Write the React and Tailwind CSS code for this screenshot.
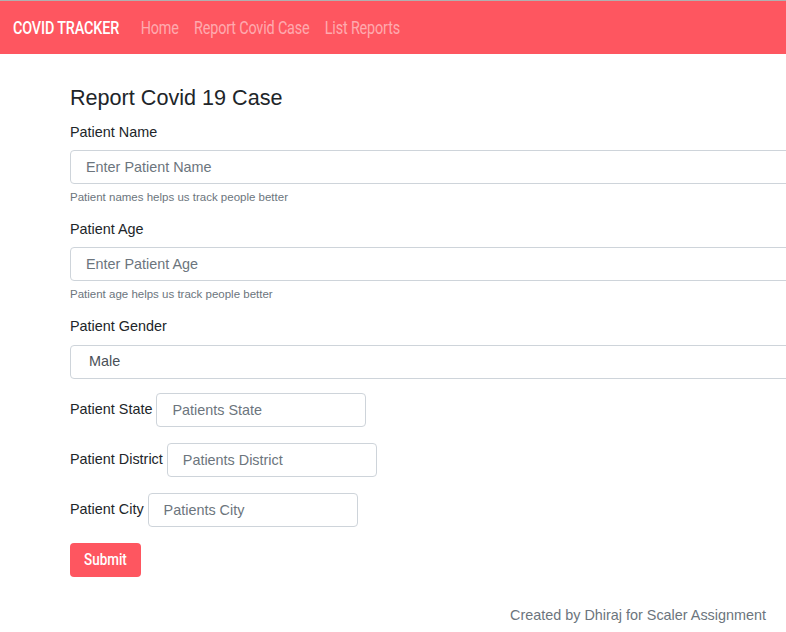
import React from 'react';

const navFont = { fontFamily: 'Roboto, "DejaVu Sans Condensed", sans-serif' };

const TextField = ({ label, placeholder, help }) => (
  <div className="mb-[14px]">
    <label className="block text-[14.4px] leading-[22px] mb-[7px]">{label}</label>
    <input
      type="text"
      placeholder={placeholder}
      className="block w-[760px] h-[34px] px-[15px] text-[14.4px] border border-[#ced4da] rounded-[4px] bg-white placeholder:text-[#6c757d] outline-none"
    />
    {help && <p className="text-[11.5px] text-[#6c757d] mt-[6px] leading-[14px]">{help}</p>}
  </div>
);

const InlineField = ({ label, placeholder }) => (
  <div className="flex items-center gap-[4px] mb-[16px]">
    <label className="text-[14.4px]">{label}</label>
    <input
      type="text"
      placeholder={placeholder}
      className="h-[34px] w-[210px] px-[15px] text-[14.4px] border border-[#ced4da] rounded-[4px] bg-white placeholder:text-[#6c757d] outline-none"
    />
  </div>
);

export default function App() {
  return (
    <div className="min-h-[632px] w-[786px] overflow-hidden bg-white text-[#212529]" style={{ fontFamily: '"Liberation Sans", Arial, sans-serif' }}>
      {/* Navbar - condensed look */}
      <nav className="h-[54px] bg-[#fe5660] border-t border-[#b0b0b0] flex items-center px-[13px]" style={navFont}>
        <div className="flex items-center origin-left scale-x-[0.8] whitespace-nowrap">
          <span className="text-white text-[18px] font-medium tracking-[-0.2px] mr-[27px]">COVID TRACKER</span>
          <div className="flex items-center gap-[19px] text-[18px] tracking-[-0.2px] text-white/50">
            <a href="#">Home</a>
            <a href="#">Report Covid Case</a>
            <a href="#">List Reports</a>
          </div>
        </div>
      </nav>

      {/* Form */}
      <div className="pl-[70px] pt-[31px]">
        <h2 className="text-[21.6px] leading-[26px] mb-[10px]">Report Covid 19 Case</h2>
        <TextField label="Patient Name" placeholder="Enter Patient Name" help="Patient names helps us track people better" />
        <TextField label="Patient Age" placeholder="Enter Patient Age" help="Patient age helps us track people better" />
        <div className="mb-[14px]">
          <label className="block text-[14.4px] leading-[22px] mb-[8px]">Patient Gender</label>
          <select className="block w-[760px] h-[34px] px-[18px] text-[14.4px] border border-[#ced4da] rounded-[4px] bg-white text-[#495057] appearance-none outline-none">
            <option>Male</option>
            <option>Female</option>
          </select>
        </div>
        <InlineField label="Patient State" placeholder="Patients State" />
        <InlineField label="Patient District" placeholder="Patients District" />
        <InlineField label="Patient City" placeholder="Patients City" />
        <button className="h-[34px] w-[71px] rounded-[4px] bg-[#fe5660] text-white flex items-center justify-center" style={navFont}>
          <span className="inline-block scale-x-[0.84] text-[16px] font-medium">Submit</span>
        </button>
      </div>

      {/* Footer */}
      <div className="text-right pr-[20px] mt-[28px] text-[14.4px] text-[#6c757d]">
        Created by Dhiraj for Scaler Assignment
      </div>
    </div>
  );
}
